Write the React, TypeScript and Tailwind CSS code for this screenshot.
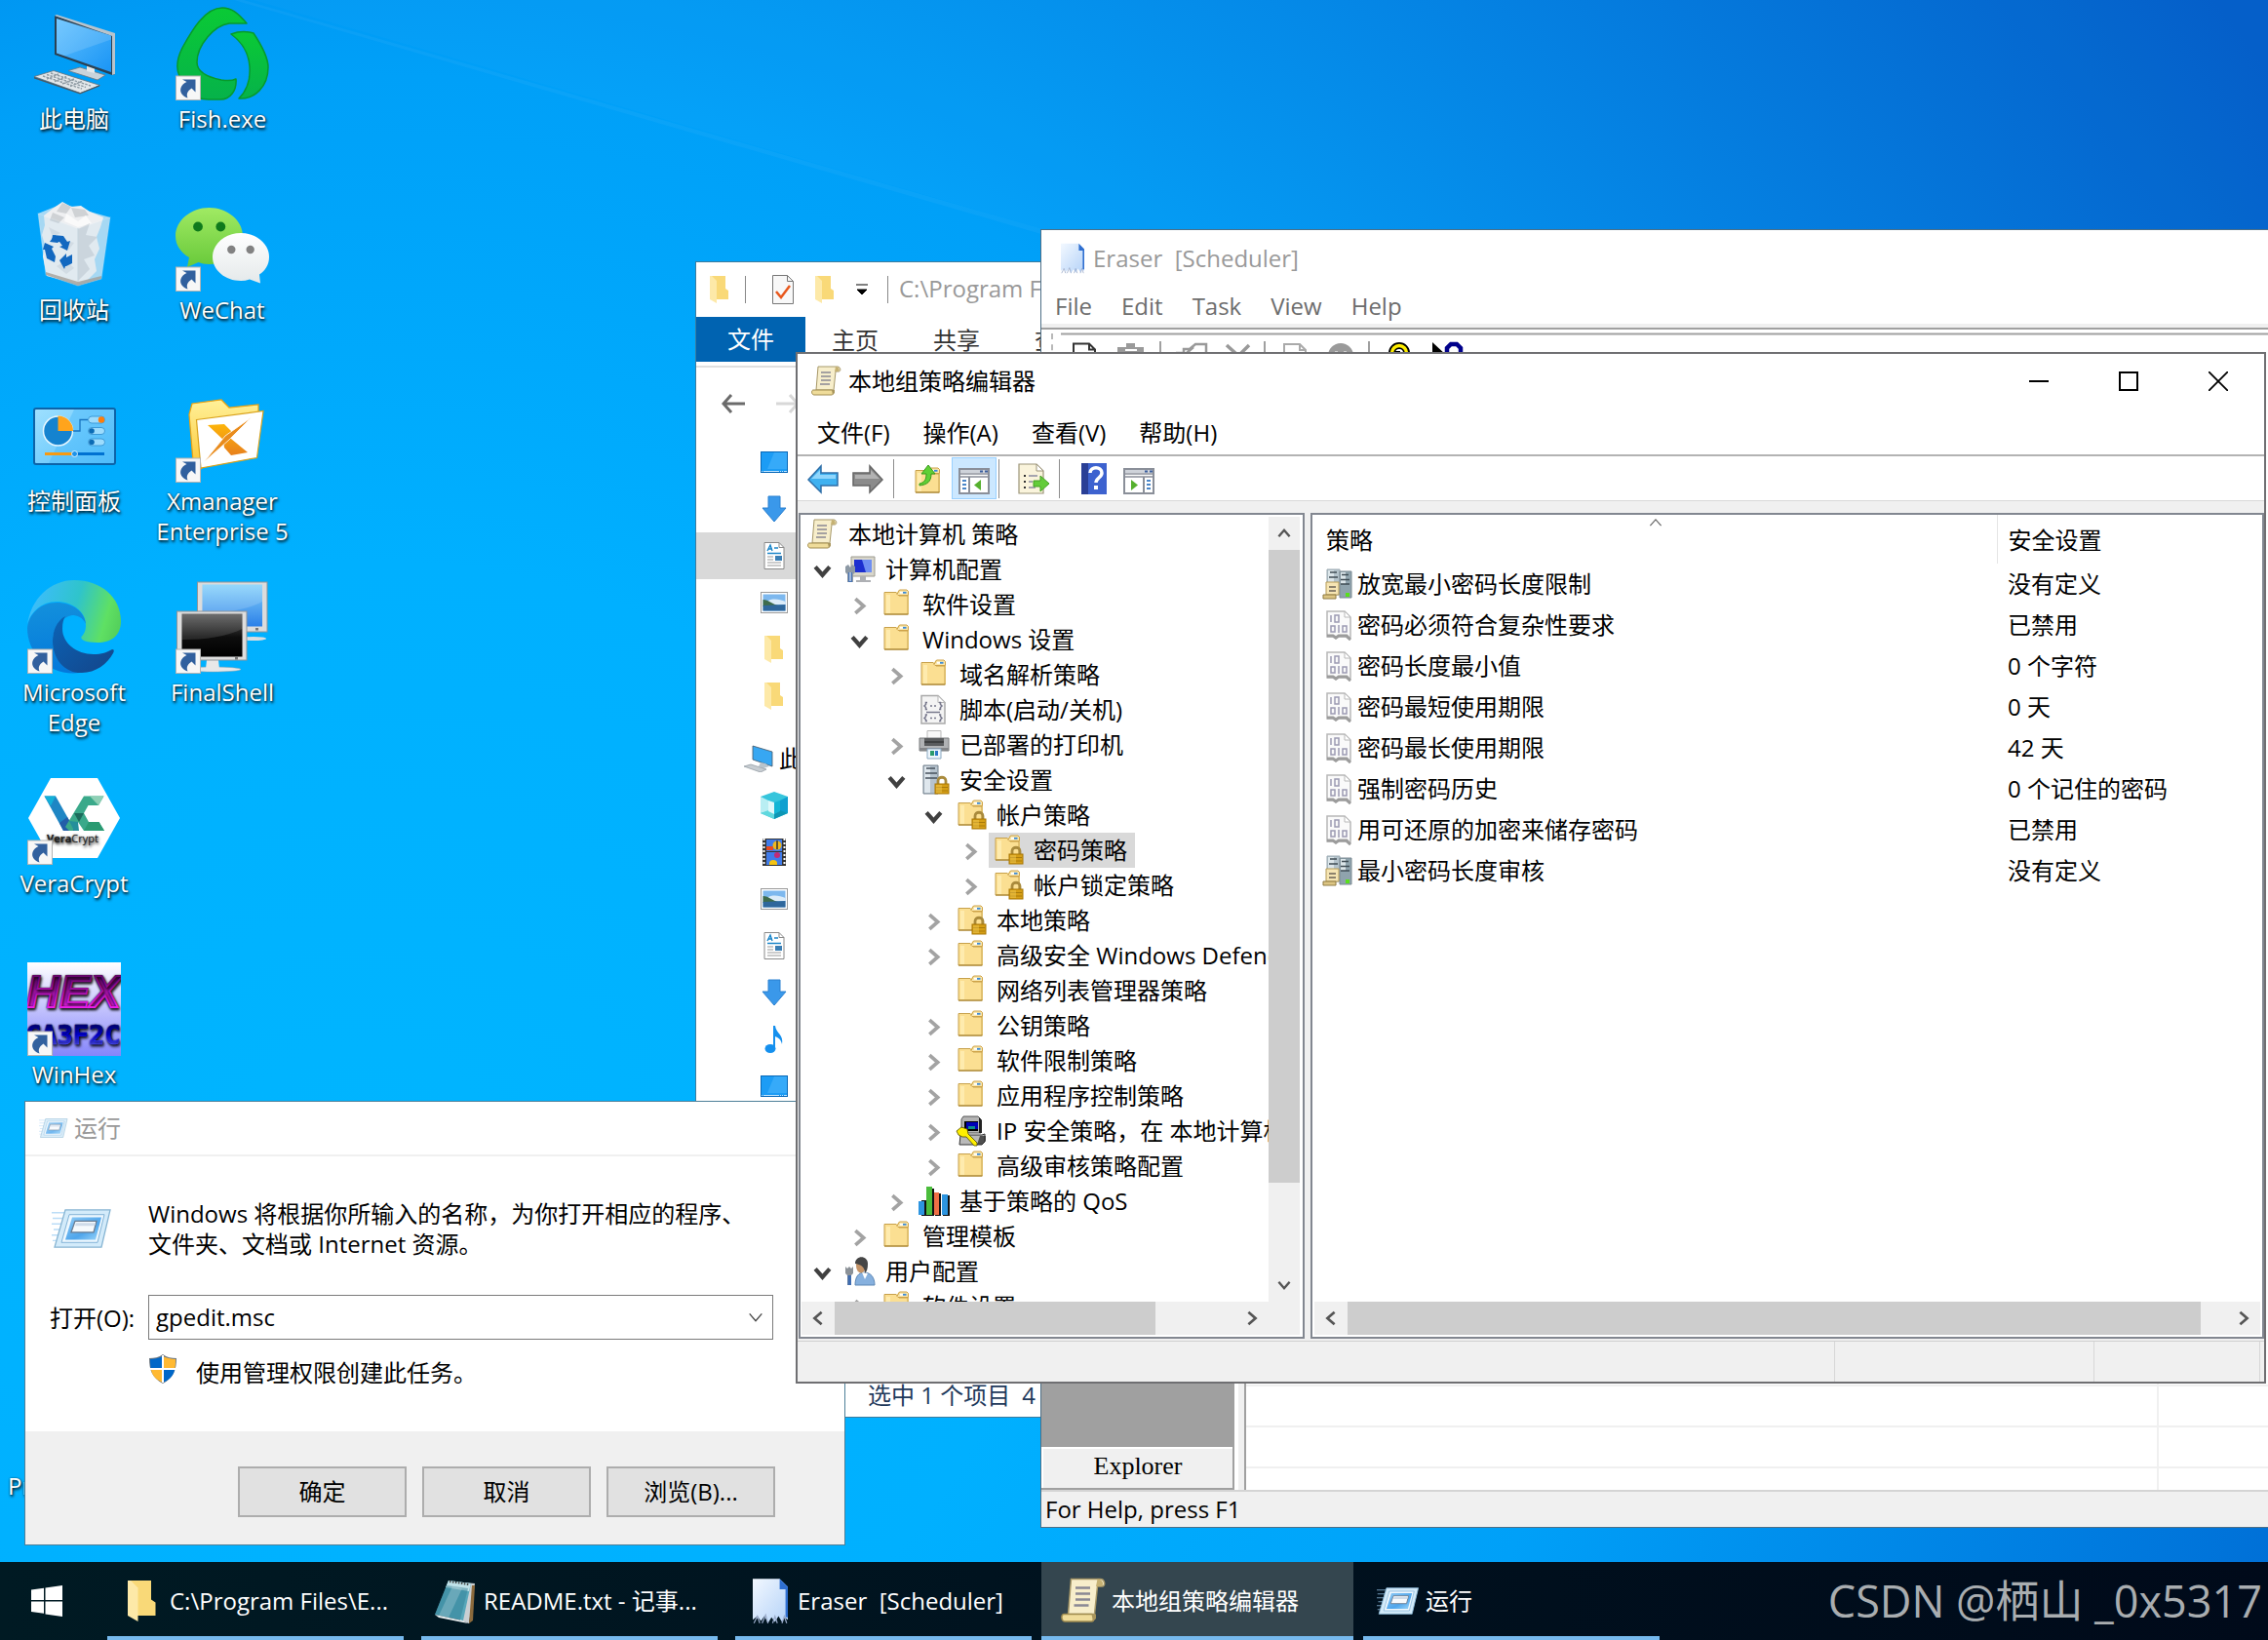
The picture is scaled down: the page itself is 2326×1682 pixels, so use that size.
import React from "react";

type P = { className?: string };

/* ------------------------------------------------------------------ */
/* Desktop icons                                                       */
/* ------------------------------------------------------------------ */

const ShortcutArrow = () => (
  <g>
    <rect x="0.5" y="71" width="25" height="24.5" fill="#f7f7f7" stroke="#b4b4b4" />
    <path d="M7 74.500h13.500v13l-4-4c-4.500 3-5.500 6-4 10-5.500-2-8.500-6-7-10.500 1-3 3.500-5 6-6z" fill="#31609e" />
  </g>
);

const ThisPcIcon = () => (
  <svg viewBox="0 0 96 96" className="size-24">
    <defs>
      <linearGradient id="pcScreen" x1="0" y1="0" x2="1" y2="1">
        <stop offset="0" stopColor="#5fc0ff" />
        <stop offset="1" stopColor="#1a95f5" />
      </linearGradient>
    </defs>
    <path d="M42 65.500l12-3.500 26 8-8 5z" fill="#c9d3da" stroke="#6b7780" strokeWidth=".8" />
    <path d="M61 56l8 2v10l-8-2z" fill="#e4e9ec" />
    <path d="M28 9l61.500 19v41.500L87 70 28 49z" fill="#2b4153" />
    <path d="M28 9l2-1 60 19v42l-3 1V30z" fill="#b9c4cc" />
    <path d="M30 12l56 17.500v37.500L30 47.500z" fill="url(#pcScreen)" />
    <path d="M30 12l56 17.500v4L38 50.300l-8-2.800z" fill="#fff" opacity=".14" />
    <path d="M7 71.500l20-6 47.500 15-20 8z" fill="#e2e7ea" stroke="#65717a" strokeWidth=".8" />
    <path d="M7 72v1.500l47 16 20-8v-1.300l-20 8z" fill="#4b5962" />
    <path d="M16 71l40 13M20 69.500l40 13M24 68l41 13M20 74l12-5M28 76.500l12-5M36 79l12-5M44 81.500l12-5" stroke="#8f9ba3" strokeWidth="1.400" strokeDasharray="2.500 1.200" />
  </svg>
);

const RecycleIcon = () => (
  <svg viewBox="0 0 96 96" className="size-24">
    <path d="M11 16l25-10 49 14-9 63-24 7-33-11z" fill="#cfe6f4" opacity=".8" />
    <path d="M17 18l9-7 10-7 9 5 10-1 9 6 14 6-3 10-4 10 3 12-5 11 2 12-9 9-12 4-30-8-4-20 2-12-3-10 3-10z" fill="#eeeff1" />
    <path d="M36 5l9 4-5 7-10-2zM45 10l14 2 4 6-14 2zM26 15l12 5-6 6-9-3z" fill="#cfd2d5" />
    <path d="M40 16l12 8 8-6 6 8-14 4-14-6z" fill="#fafafa" />
    <path d="M52 32l12-6-4 12 12 2-9 9 6 10-11 4 6 10-12 12z" fill="#d3d6da" />
    <path d="M22 30l12 6-8 4zM30 70l10-6 8 8-8 6zM36 42l12 4-6 8z" fill="#dcdfe2" />
    <path d="M11 16l41 15 33-11-9 63-24 7-33-11z" fill="#a9d4ee" opacity=".18" stroke="#e9f7ff" strokeWidth="1.200" />
    <path d="M52 31v59" stroke="#c5d5de" strokeWidth="1" />
    <path d="M19 76l33 10 24-6v3l-24 7-33-11z" fill="#a5a09a" opacity=".8" />
    <g fill="#1268c0">
      <path d="M26 38l11 1 4 6 3-1-3 10-8-4 3-1-3-4-8-1z" />
      <path d="M18 46l9 4-2 2 4 8-1 6-8-4-2-9-2 0z" />
      <path d="M33 64l7-7v4l6-3v9l-6 3-1 0-1 3z" />
      <path d="M23 45l5-7 7 5-4 3z" />
    </g>
  </svg>
);

const ControlPanelIcon = () => (
  <svg viewBox="0 0 96 96" className="size-24">
    <defs>
      <linearGradient id="cpBg" x1="0" y1="0" x2="1" y2="1">
        <stop offset="0" stopColor="#9fe0ff" />
        <stop offset="1" stopColor="#55c0fb" />
      </linearGradient>
    </defs>
    <rect x="7" y="20" width="83" height="57" rx="2" fill="url(#cpBg)" stroke="#0d63a8" strokeWidth="2" />
    <path d="M48 21h41v55H22z" fill="#48b8fa" opacity=".45" />
    <circle cx="31.500" cy="43" r="15" fill="#1583cf" stroke="#e6f7ff" strokeWidth="1.500" />
    <path d="M31.500 43V27.500A15.500 15.500 0 0 1 47 43z" fill="#ffa41c" />
    <path d="M47 43h7V31.500h8" fill="none" stroke="#1874c0" strokeWidth="1.300" />
    <g fill="#9ddcfd" stroke="#3d9bd8" strokeWidth="1">
      <rect x="62.500" y="28" width="17" height="7" rx="3.500" />
      <rect x="62.500" y="39.500" width="17" height="7" rx="3.500" />
      <rect x="62.500" y="51" width="17" height="7" rx="3.500" />
    </g>
    <circle cx="76" cy="31.500" r="3.200" fill="#ff7d0a" />
    <circle cx="66" cy="43" r="2.800" fill="#0b6bb5" />
    <circle cx="66" cy="54.500" r="2.800" fill="#0b6bb5" />
    <path d="M18 66.500h29" stroke="#f79a12" strokeWidth="3" />
    <path d="M49 66.500h30" stroke="#0072d2" strokeWidth="3" />
    <circle cx="48.500" cy="66.500" r="3" fill="#1c93ea" stroke="#fff" strokeWidth=".8" />
  </svg>
);

const EdgeIcon = () => (
  <svg viewBox="0 0 96 96" className="size-24">
    <defs>
      <linearGradient id="edTop" x1="0" y1=".4" x2="1" y2=".6">
        <stop offset="0" stopColor="#3dbcff" />
        <stop offset=".5" stopColor="#2fc4cb" />
        <stop offset=".85" stopColor="#5fe063" />
        <stop offset="1" stopColor="#55d15c" />
      </linearGradient>
      <linearGradient id="edLeft" x1=".3" y1="0" x2=".4" y2="1">
        <stop offset="0" stopColor="#1390dc" />
        <stop offset="1" stopColor="#0479db" />
      </linearGradient>
      <linearGradient id="edDark" x1="0" y1="0" x2="1" y2="1">
        <stop offset="0" stopColor="#0b63b6" />
        <stop offset="1" stopColor="#144589" />
      </linearGradient>
    </defs>
    <path d="M0 47C3 19 24 0 48 0c28 0 48 18 48 42 0 15-10 22-24 22-12 0-18-3-16.500-6 4-4 4.500-8 4.500-12C60 32 46 22 30 22 14 22 2 34 0 47z" fill="url(#edTop)" />
    <path d="M0 49C2 34 14 23 30 23c17 0 29 10 30 22-3-7-9-9-14-9-10 2-20 12-20 27 0 17 12 30 28 32C22 99 0 75 0 49z" fill="url(#edLeft)" />
    <path d="M39 37c-9 5-13 15-13 26 0 19 14 33 30 32 14 0 26-9 32-20q2-4-1-4c-5 3-11 5-19 5-18 0-32-12-32-26 0-6 1-10 3-13z" fill="url(#edDark)" />
    <ShortcutArrow />
  </svg>
);

const VeraCryptIcon = () => (
  <svg viewBox="0 0 96 96" className="size-24">
    <path d="M24 7h48l23 41-23 41H24L1 48z" fill="#fff" />
    <path d="M17.500 25.500H29L49 61H37z" fill="#1e86c4" />
    <path d="M17.500 25.500H29l-5 10z" fill="#12b0d8" />
    <path d="M33 53l8-6 8 14H37z" fill="#235ea8" />
    <path d="M58 25.500h20.500L73 35H62.500L58 43l5 9h10.500L79 61H58l-6-9-5 9h-4l-4-4z" fill="#3aa98a" />
    <path d="M64 25.500h14.500L73 35z" fill="#8fd0b5" />
    <path d="M48 43h10l-5 9z" fill="#1c6b5b" />
    <path d="M43 51l5 10h5l-1-9z" fill="#258f9b" />
    <path d="M63 52h10.500L79 61H58z" fill="#2a9a72" />
    <text x="20" y="73" fontFamily="Open Sans, sans-serif" fontSize="11" fill="#222">
      <tspan fontWeight="700">Vera</tspan>Crypt
    </text>
    <ShortcutArrow />
  </svg>
);

const WinHexIcon = () => (
  <svg viewBox="0 0 96 96" className="size-24">
    <defs>
      <linearGradient id="whBg" x1="0" y1="0" x2="0" y2="1">
        <stop offset="0" stopColor="#ffffff" />
        <stop offset="1" stopColor="#8585fb" />
      </linearGradient>
      <linearGradient id="whA" gradientUnits="userSpaceOnUse" x1="0" y1="9" x2="0" y2="48">
        <stop offset="0" stopColor="#4d0055" />
        <stop offset="1" stopColor="#f020f0" />
      </linearGradient>
      <linearGradient id="whB" gradientUnits="userSpaceOnUse" x1="0" y1="60" x2="0" y2="84">
        <stop offset="0" stopColor="#000050" />
        <stop offset=".6" stopColor="#0000f0" />
        <stop offset="1" stopColor="#4a4aff" />
      </linearGradient>
    </defs>
    <rect width="96" height="96" fill="url(#whBg)" />
    <text x="-1" y="46" fontFamily="Liberation Sans, sans-serif" fontWeight="700" fontStyle="italic" fontSize="47" fill="url(#whA)" stroke="url(#whA)" strokeWidth="2">
      HEX
    </text>
    <text x="-2" y="84" fontFamily="DejaVu Sans Mono, monospace" fontWeight="700" fontSize="27" fill="url(#whB)" stroke="url(#whB)" strokeWidth=".6">
      CA3F2C
    </text>
    <ShortcutArrow />
  </svg>
);

const FishIcon = () => (
  <svg viewBox="0 0 96 96" className="size-24">
    <defs>
      <linearGradient id="fishG" x1="0" y1="0" x2="0" y2="1">
        <stop offset="0" stopColor="#0aca35" />
        <stop offset="1" stopColor="#06b24a" />
      </linearGradient>
    </defs>
    <g fill="url(#fishG)" stroke="#079a2b" strokeWidth="1.500" strokeLinejoin="round">
      <path d="M73 17C64 6 57 1 48 1 30 1 17 24 7 42c-5 10-7 20-3 29 3 12 12 24 30 24h12c10 0 17-9 16-21-4 2-9 2-15 1-15-3-25-8-25-18 0-18 18-38 33-40z" />
      <path d="M57 28c8-3 16-3 23-1 8 12 15 24 15 35 0 20-14 33-30 32 9-9 12-20 11-33-1-14-8-25-19-33z" />
    </g>
    <ShortcutArrow />
  </svg>
);

const WeChatIcon = () => (
  <svg viewBox="0 0 96 96" className="size-24">
    <defs>
      <linearGradient id="wcG" x1="0" y1="0" x2="0" y2="1">
        <stop offset="0" stopColor="#a0ea63" />
        <stop offset="1" stopColor="#68c93a" />
      </linearGradient>
      <linearGradient id="wcW" x1="0" y1="0" x2="0" y2="1">
        <stop offset="0" stopColor="#ffffff" />
        <stop offset="1" stopColor="#e4e9ea" />
      </linearGradient>
    </defs>
    <path d="M34.500 10C53 10 69 23 69 39S53 68 34.500 68c-5 0-8-1-11-2L12 71l2-10C5 56 0 48 0 39c0-16 16-29 34.500-29z" fill="url(#wcG)" />
    <circle cx="23" cy="29.500" r="4.900" fill="#0f7a1c" />
    <circle cx="46.300" cy="29.500" r="4.900" fill="#0f7a1c" />
    <path d="M67 36c16 0 29 11 29 24.500 0 8-4 14-10 18l1 9-11-4c-3 1-6 1.500-9 1.500-16 0-29-11-29-24.500S51 36 67 36z" fill="url(#wcW)" />
    <circle cx="57.300" cy="53" r="4.200" fill="#828282" />
    <circle cx="76.700" cy="53" r="4.200" fill="#828282" />
    <ShortcutArrow />
  </svg>
);

const XmanagerIcon = () => (
  <svg viewBox="0 0 96 96" className="size-24">
    <defs>
      <linearGradient id="xmF" x1="0" y1="0" x2="0" y2="1">
        <stop offset="0" stopColor="#fff19a" />
        <stop offset="1" stopColor="#fcc733" />
      </linearGradient>
      <linearGradient id="xmX" x1="0" y1="0" x2="0" y2="1">
        <stop offset="0" stopColor="#fdb50a" />
        <stop offset="1" stopColor="#e8801c" />
      </linearGradient>
    </defs>
    <path d="M14 26l3-11 30-4 8 8 30-3v10L26 82l-8-8z" fill="url(#xmF)" stroke="#eea20f" strokeWidth="1.200" />
    <path d="M21.500 31.500L90 22.500l-6.500 48L26 81z" fill="#fff" stroke="#d9a21b" strokeWidth="1.200" />
    <path d="M33 37l17-1 7 7v8l17 14-17 3-7-8-1-8z" fill="url(#xmX)" />
    <path d="M78 29L55 52 29 75l22-27z" fill="#e98c1d" stroke="#fff" strokeWidth=".8" />
    <ShortcutArrow />
  </svg>
);

const FinalShellIcon = () => (
  <svg viewBox="0 0 96 96" className="size-24">
    <defs>
      <linearGradient id="fsB" x1="0" y1="0" x2="0" y2="1">
        <stop offset="0" stopColor="#86d2fb" />
        <stop offset="1" stopColor="#2b80e8" />
      </linearGradient>
      <linearGradient id="fsK" x1="0" y1="0" x2="0" y2="1">
        <stop offset="0" stopColor="#5a5a5a" />
        <stop offset=".55" stopColor="#0d0d0d" />
        <stop offset="1" stopColor="#000" />
      </linearGradient>
    </defs>
    <ellipse cx="80" cy="60" rx="13" ry="2" fill="#d9dde0" />
    <rect x="22.500" y="2" width="71.500" height="51" fill="#dcdcdc" stroke="#8e9499" />
    <rect x="27.500" y="4.500" width="61.500" height="43" fill="url(#fsB)" />
    <path d="M27.500 34C50 34 75 30 89 22V4.500H27.500z" fill="#fff" opacity=".15" />
    <rect x="82" y="49" width="3" height="2.500" fill="#777" />
    <ellipse cx="38" cy="91.500" rx="29" ry="2.500" fill="#e6e8ea" stroke="#9aa0a5" strokeWidth=".5" />
    <path d="M32 82h12l1 9H31z" fill="#e8e8e8" />
    <rect x="1.500" y="32" width="71.500" height="50" fill="#dedede" stroke="#8e9499" />
    <rect x="6.500" y="34.500" width="62" height="44" fill="url(#fsK)" />
    <path d="M6.500 61c24 0 46-3 62-11V34.500h-62z" fill="#fff" opacity=".12" />
    <rect x="61" y="79" width="3" height="2.500" fill="#777" />
    <ShortcutArrow />
  </svg>
);

const desktopColumns: { name: string; icon: React.ReactNode }[][] = [
  [
    { name: "此电脑", icon: <ThisPcIcon /> },
    { name: "回收站", icon: <RecycleIcon /> },
    { name: "控制面板", icon: <ControlPanelIcon /> },
    { name: "Microsoft Edge", icon: <EdgeIcon /> },
    { name: "VeraCrypt", icon: <VeraCryptIcon /> },
    { name: "WinHex", icon: <WinHexIcon /> },
  ],
  [
    { name: "Fish.exe", icon: <FishIcon /> },
    { name: "WeChat", icon: <WeChatIcon /> },
    { name: "Xmanager Enterprise 5", icon: <XmanagerIcon /> },
    { name: "FinalShell", icon: <FinalShellIcon /> },
  ],
];

/* ------------------------------------------------------------------ */
/* Small icons                                                         */
/* ------------------------------------------------------------------ */

const ScrollIcon = ({ className = "size-8" }: P) => (
  <svg viewBox="0 0 32 32" className={className}>
    <path d="M7 1h20c3 0 4 5 1 5h-3L23 25H5z" fill="#f7eecb" stroke="#a79868" strokeWidth="1" />
    <path d="M25 1c4 0 5 5 2 5h-3z" fill="#c5b173" />
    <path d="M2 25h19c2 0 2 5 0 5H3c-3 0-3-5-1-5z" fill="#efdc9a" stroke="#a08c50" strokeWidth="1" />
    <path d="M21 25h3v3l-2 2z" fill="#a9965d" />
    <path d="M10 7h10M10 11h10M10 15h10M9 19h10" stroke="#8a8894" strokeWidth="1.700" />
  </svg>
);

const Folder = () => (
  <g>
    <path d="M3 3.500h13l2-2.500h8l2 2v23H3z" fill="#f6dc8c" />
    <path d="M3 3.500h12l3 3.500h9v19H3z" fill="#fbdf92" stroke="#c7a14c" strokeWidth="1" />
    <path d="M5 6h4v19H5z" fill="#fff0bb" opacity=".7" />
    <path d="M16 5.500L18.500 1H26l1.500 1.500v4H17z" fill="#f9e6ac" stroke="#cfa348" strokeWidth="1" />
    <path d="M19 3.800h3.500" stroke="#fff" strokeWidth="1.800" />
    <path d="M22 3.800h3.500" stroke="#3a8ad8" strokeWidth="1.800" />
    <path d="M3 26h24.500" stroke="#a88636" strokeWidth="1.200" />
  </g>
);

const Lock = () => (
  <g>
    <path d="M20 21v-4c0-5 8-5 8 0v4" fill="none" stroke="#a98a3c" strokeWidth="2.800" />
    <rect x="17" y="20" width="14" height="10" fill="#d69f16" stroke="#a87705" strokeWidth="1" />
    <path d="M18 23.500h12M18 27h12" stroke="#a97b0b" strokeWidth="1" />
    <path d="M18 21h6v8h-6z" fill="#f3cf59" opacity=".45" />
  </g>
);

const FolderIcon = () => (
  <svg viewBox="0 0 32 32" className="size-8"><Folder /></svg>
);
const FolderLockIcon = () => (
  <svg viewBox="0 0 32 32" className="size-8"><Folder /><Lock /></svg>
);

const ComputerCfgIcon = () => (
  <svg viewBox="0 0 32 32" className="size-8">
    <path d="M7 3h24v20H7z" fill="#d8d6cb" stroke="#9c9a90" />
    <path d="M10 6h18v13H10z" fill="#1c2fd0" />
    <path d="M18 6h10v13h-6z" fill="#6f8ff2" />
    <path d="M16 23h6v4h5v2H12v-2h4z" fill="#aeb0b4" />
    <path d="M1 13l3-2 2 3 2-3 3 2v6l-2 2v8H3v-8l-2-2z" fill="#8d99a5" />
    <path d="M4 19h4v10H4z" fill="#4a74b4" />
    <path d="M6 19v9" stroke="#dfe9f6" strokeWidth="1.200" />
  </svg>
);

const ScriptIcon = () => (
  <svg viewBox="0 0 32 32" className="size-8">
    <path d="M3 1.500h17l7 7V30H3z" fill="#f4f4f4" stroke="#a9a9a9" strokeWidth="1.500" />
    <path d="M20 1.500v7h7z" fill="#fff" stroke="#b5b5b5" strokeWidth="1" />
    <g fill="none" stroke="#77788c" strokeWidth="1.500">
      <path d="M9 8.500H7.500v2L6 12l1.500 1.500v2H9M21 8.500h1.500v2L24 12l-1.500 1.500v2H21M12 12h2M16 12h2M8 18.500h14" />
      <path d="M9 21H7.500v2L6 24.500 7.500 26v1.500H9M21 21h1.500v2l1.500 1.500-1.500 1.500v1.500H21M12 24.500h2M16 24.500h2" />
    </g>
  </svg>
);

const PrinterIcon = () => (
  <svg viewBox="0 0 32 32" className="size-8">
    <path d="M9 1.500h14V11H9z" fill="#f8f8f8" stroke="#b9b9b9" />
    <path d="M1 9h30v13H1z" fill="#b1b3b5" stroke="#7a7c7e" />
    <path d="M6 9h20v8H6z" fill="#5a5c5e" />
    <path d="M6 12h20v2H6z" fill="#3f4142" />
    <path d="M1 19h30v3H1z" fill="#85878a" />
    <path d="M9 20h14v10H9z" fill="#eef6fc" stroke="#8aa9c2" />
    <path d="M12 22h4v5h-4z" fill="#2a9a6c" />
    <path d="M17 22h3v5h-3z" fill="#2a77c8" />
  </svg>
);

const ServerLockIcon = () => (
  <svg viewBox="0 0 32 32" className="size-8">
    <path d="M5 1h15v29H5z" fill="#b6c3ce" stroke="#72808c" />
    <path d="M6 2h6v27H6z" fill="#dfe7ed" />
    <path d="M8 4h9M7 9h12M7 14h12" stroke="#47525c" strokeWidth="1.700" />
    <Lock />
  </svg>
);

const IpSecIcon = () => (
  <svg viewBox="0 0 32 32" className="size-8">
    <path d="M8 1h15l3 3v14H6V4z" fill="#b5b5b5" stroke="#555" />
    <path d="M24 2l3 3v13h-3z" fill="#222" />
    <path d="M9 6h14v10H9z" fill="#000" />
    <path d="M11 7h12v7H11z" fill="#0000b8" />
    <path d="M13 11h7v3h-7z" fill="#0a8c8c" />
    <path d="M5 20h22l3-1v8l-3 3H4z" fill="#b9b9b9" stroke="#333" />
    <path d="M25 21h6v5l-4 4h-5z" fill="#222" opacity=".7" />
    <path d="M1 16l5-4 6 2 1 5 9 9v3h-3l-8-9H7l-4-2z" fill="#ffef00" stroke="#4b4600" strokeWidth=".8" />
  </svg>
);

const QosIcon = () => (
  <svg viewBox="0 0 32 32" className="size-8">
    <path d="M3 15h6v16H3zM9 3h7v28H9zM17 8h6v23h-6zM25 10h7v21h-7z" fill="#111" />
    <path d="M0 16h6v14H0z" fill="#2d95e0" />
    <path d="M8 1h6v29H8z" fill="#4bbd3c" />
    <path d="M16 7h5v23h-5z" fill="#ef7045" />
    <path d="M24 9h6v21h-6z" fill="#2d95e0" />
  </svg>
);

const UserCfgIcon = () => (
  <svg viewBox="0 0 32 32" className="size-8">
    <path d="M11 30c0-9 4-13 9-13 7 0 11 5 11 13z" fill="#86b0de" stroke="#5d87b5" />
    <path d="M18 17l3 7 3-6z" fill="#fff" />
    <ellipse cx="17" cy="10" rx="5" ry="7.500" fill="#c59468" />
    <path d="M11 8c0-9 13-9 13 0 0 5-1 8-3 10 0-6-3-9-10-10z" fill="#454545" />
    <path d="M1 11l2 2 2-2 2 2 2-2v7l-2 2v10H3V20l-2-2z" fill="#8b9197" />
    <path d="M3.500 20h3.500v10H3.500z" fill="#3f6cb0" />
  </svg>
);

const PolicyServerIcon = () => (
  <svg viewBox="0 0 32 32" className="size-8">
    <path d="M5 1h13v26H5z" fill="#b4c3cb" stroke="#9aa9b1" />
    <path d="M18 3h12v27H18z" fill="#8fa3ad" stroke="#7a8992" />
    <path d="M6 2h6v12H6zM19 4h5v12h-5z" fill="#dce6ea" />
    <path d="M8 4h7M20 6.500h7M7 9h9M19 11.500h9M19 16h9" stroke="#3f4c54" strokeWidth="1.600" />
    <path d="M4 14h13v13H4z" fill="#f6e5b3" stroke="#b59c5a" />
    <path d="M1 27h13v4H1z" fill="#dcc583" stroke="#8f7a42" />
    <path d="M7 19h7M7 23h7" stroke="#6b6255" strokeWidth="1.500" />
    <path d="M24 25h4v4h-4z" fill="#59e01c" />
  </svg>
);

const PolicyBitsIcon = () => (
  <svg viewBox="0 0 32 32" className="size-8">
    <path d="M5 2h18l6 6v20l-1 3-4-3H17l-3 2-3-2H5z" fill="#fafafa" stroke="#b8b8b8" strokeWidth="1.500" />
    <path d="M23 2v6h6z" fill="#fff" stroke="#b8b8b8" />
    <path d="M5 27h6l3 2 3-2h8l4 4" fill="none" stroke="#9c9c9c" strokeWidth="3" />
    <g fill="none" stroke="#9c9ab2" strokeWidth="1.500">
      <path d="M9 6v7M13 6h4v7h-4zM9 17h4v6H9zM17 16v8M21 17h4v6h-4z" />
    </g>
  </svg>
);

const NotchFolder = ({ className = "h-7 w-5" }: P) => (
  <svg viewBox="0 0 20 28" className={className}>
    <path d="M1 0h15v13l3 2v9H6z" fill="#f9d978" />
    <path d="M0 0h2l5 5v23l-7-4z" fill="#fde9a8" />
  </svg>
);

const DesktopIcon = () => (
  <svg viewBox="0 0 28 22" className="h-[22px] w-7">
    <rect x=".5" y=".5" width="27" height="21" fill="#1c9cf5" stroke="#0868b8" />
    <path d="M14 1h13v17H7z" fill="#48b4fb" opacity=".6" />
    <path d="M1 20.500h26" stroke="#bfe4ff" strokeDasharray="1 1 16 1 1 1" />
  </svg>
);
const DownloadIcon = () => (
  <svg viewBox="0 0 28 28" className="size-7">
    <path d="M8 1h12v12h6L14 27 2 13h6z" fill="#3a98ea" stroke="#2a80d0" />
  </svg>
);
const DocIcon = () => (
  <svg viewBox="0 0 28 28" className="size-7">
    <path d="M4 .5h15l5 5v22H4z" fill="#fff" stroke="#8a8a8a" />
    <path d="M19 .5v5h5" fill="none" stroke="#8a8a8a" />
    <path d="M7 9l3-6 2 6M8 7h4M14 6h4M7 11.500h14" stroke="#1c86c9" strokeWidth="1.400" fill="none" />
    <path d="M15 14h7v5h-7z" fill="#3b7fb5" />
    <path d="M7 15h6M7 18h6M7 21h14M7 24h14" stroke="#9a9a9a" strokeWidth="1.200" />
  </svg>
);
const PictureIcon = () => (
  <svg viewBox="0 0 28 22" className="h-[22px] w-7">
    <rect x=".5" y=".5" width="27" height="21" fill="#fff" stroke="#9a9a9a" />
    <path d="M2.500 2.500h23v17h-23z" fill="#7db8ee" />
    <path d="M8 9c6-3 12-1 17.500 1v3h-17z" fill="#dcecf9" />
    <path d="M2.500 8c6 0 10 5 16 6l-16 1z" fill="#3e6b4c" />
    <path d="M2.500 14l23-1v6.500h-23z" fill="#2f679c" />
  </svg>
);
const SmallPcIcon = () => (
  <svg viewBox="0 0 30 28" className="h-7 w-[30px]">
    <path d="M9 1l20 6v15L9 15z" fill="#37a7f2" stroke="#456" strokeWidth=".8" />
    <path d="M17 18l5 1 4 3-6 2-5-2z" fill="#b9c4cc" />
    <path d="M0 22l7-2 16 5-6 3z" fill="#c7cdd2" stroke="#8a949b" strokeWidth=".7" />
  </svg>
);
const CubeIcon = () => (
  <svg viewBox="0 0 28 28" className="size-7">
    <path d="M0 5l14-5 14 5v17l-14 6-14-6z" fill="#36c5dc" />
    <path d="M0 5l8 4v11l-8 2z" fill="#b9eef3" />
    <path d="M0 22l8-3 6 4v5z" fill="#5fd8de" />
    <path d="M28 5l-8 4v11l8 2z" fill="#0fa0d0" />
    <path d="M28 22l-8-3-6 4v5z" fill="#0d96b4" />
    <path d="M8 9l6 2v12l-6-3z" fill="#e0f8fa" />
    <path d="M20 9l-6 2v12l6-3z" fill="#12b5d5" />
  </svg>
);
const VideoIcon = () => (
  <svg viewBox="0 0 28 28" className="size-7">
    <rect x="2" y="0" width="24" height="28" fill="#333" />
    <path d="M3.500 0v28M24.500 0v28" stroke="#fff" strokeWidth="2" strokeDasharray="2 2" />
    <path d="M6 1h16v12H6zM6 14h16v13H6z" fill="#3f7bea" />
    <path d="M6 8h7v4H6z" fill="#e8491f" />
    <circle cx="17" cy="7" r="4.500" fill="#f0b81c" />
    <path d="M17 2v9" stroke="#333" strokeWidth="1.500" />
    <circle cx="17" cy="17" r="3" fill="#c22a76" />
    <path d="M9 25c0-4 8-4 8 0v2H9z" fill="#f5c414" />
  </svg>
);
const MusicIcon = () => (
  <svg viewBox="0 0 28 28" className="size-7">
    <ellipse cx="10" cy="23.500" rx="5.500" ry="4.500" fill="#1590ee" />
    <path d="M13 0h2c1 8 9 9 7 19-1-5-4-7-7-8v13h-2z" fill="#1590ee" />
  </svg>
);

const RunGlyph = ({ className = "" }: P) => (
  <svg viewBox="0 0 62 42" className={className} preserveAspectRatio="none">
    <defs>
      <linearGradient id="runIn" x1="0" y1="0" x2="1" y2="1">
        <stop offset="0" stopColor="#8fcbf6" />
        <stop offset=".6" stopColor="#4fa6ec" />
        <stop offset="1" stopColor="#9fd8fb" />
      </linearGradient>
    </defs>
    <path d="M0 4h16M1 10h14M0 16h12M2 22h10M0 28h10M1 34h8" stroke="#9fd0f5" strokeWidth="1.500" opacity=".7" />
    <path d="M14 1h46l-9 40H3z" fill="#d3ebfa" stroke="#86b4d2" strokeWidth="1.300" />
    <path d="M18 6h36l-7 30H10z" fill="#eef8fe" stroke="#7fb1d6" strokeWidth="1" />
    <path d="M21 9h30l-6 24H14z" fill="url(#runIn)" />
    <path d="M24 13h22l-3 12H20z" fill="#f6fafd" stroke="#6a7d92" strokeWidth="1.300" />
    <path d="M25 15h20l-1 3H24z" fill="#cfdcea" />
  </svg>
);

const EraserDoc = ({ className = "" }: P) => (
  <svg viewBox="0 0 32 40" className={className}>
    <defs>
      <linearGradient id="erG" x1="0" y1="0" x2="1" y2="1">
        <stop offset="0" stopColor="#f2f8ff" />
        <stop offset="1" stopColor="#b4d2f8" />
      </linearGradient>
    </defs>
    <path d="M1 1h23l7 7v28l-3-2-2 4-3-5-3 5-3-4-3 5-3-6-3 4-3-4-4 3z" fill="url(#erG)" />
    <path d="M24 1l7 7v26h-2V10h-5z" fill="#2f6fd0" />
    <path d="M2 39l3-6 2 6M9 39l3-7 2 7M18 39l2-6 2 6M26 39l2-6 2 6" stroke="#9aabca" fill="none" />
  </svg>
);

const NotepadIcon = () => (
  <svg viewBox="0 0 48 48" className="size-12">
    <path d="M19 4l24 2-6 41-9-3z" fill="#c9cfd3" />
    <path d="M40 8l3 0-2 36-4 3z" fill="#8b6a3c" />
    <path d="M16 3l23 3-8 38L2 38z" fill="#58a7ba" />
    <path d="M16 3l23 3-2 8L13 10z" fill="#bfe1e8" />
    <path d="M14 8l22 3-8 32L2 38z" fill="#2d7d92" opacity=".45" />
    <path d="M20 9l10 2-14 30-10-2z" fill="#fff" opacity=".2" />
    <path d="M2 38l28 6 6 3L6 41z" fill="#e8eef0" />
    <path d="M17 4l20 3" stroke="#444" strokeWidth="2" strokeDasharray="1.500 1.500" />
  </svg>
);

const Chevron = ({ dir, className }: { dir: "up" | "down" | "left" | "right"; className?: string }) => {
  const d = {
    up: "M3 14l7-8 7 8",
    down: "M3 6l7 8 7-8",
    left: "M14 3l-8 7 8 7",
    right: "M6 3l8 7-8 7",
  }[dir];
  return (
    <svg viewBox="0 0 20 20" className={className} fill="none" stroke="currentColor">
      <path d={d} />
    </svg>
  );
};

/* ------------------------------------------------------------------ */
/* File Explorer                                                       */
/* ------------------------------------------------------------------ */

const quickIcons = [DesktopIcon, DownloadIcon, DocIcon, PictureIcon, NotchFolder, NotchFolder];
const pcIcons = [CubeIcon, VideoIcon, PictureIcon, DocIcon, DownloadIcon, MusicIcon, DesktopIcon];

const ExplorerWindow = () => (
  <section aria-label="文件资源管理器" className="absolute left-[713px] top-[268px] flex h-[1186px] w-[900px] flex-col border border-[#3c7c9e] bg-white">
    <header className="flex h-14 shrink-0 items-center pl-3.5 text-[#999]">
      <NotchFolder />
      <span className="ml-4 h-7 w-px bg-[#888]" />
      <svg viewBox="0 0 22 30" className="ml-[27px] h-[30px] w-[22px]">
        <path d="M.5 .5h15l6 6v23H.5z" fill="#f8f8f8" stroke="#777" />
        <path d="M15.500 .5v6h6" fill="none" stroke="#777" />
        <path d="M4 17l5 6 9-12" fill="none" stroke="#e8571c" strokeWidth="2.500" />
      </svg>
      <NotchFolder className="ml-[22px] h-7 w-5" />
      <svg viewBox="0 0 12 12" className="ml-[22px] size-3">
        <path d="M0 1h12M1 6h10l-5 5z" fill="#000" stroke="#000" />
      </svg>
      <span className="ml-5 h-7 w-px bg-[#888]" />
      <span className="ml-[11px] whitespace-pre pb-0.5">C:\Program Files</span>
    </header>
    <nav className="flex h-[46px] shrink-0 items-center text-[#333]">
      <button className="h-full w-28 bg-[#0063b1] text-white">文件</button>
      <button className="ml-[27px] pt-0.5">主页</button>
      <button className="ml-14 pt-0.5">共享</button>
      <button className="ml-14 pt-0.5">查看</button>
    </nav>
    <div className="mt-1 flex h-[75px] shrink-0 items-center gap-8 border-t-2 border-[#e0e0e0] pl-[26px]">
      <svg viewBox="0 0 24 20" className="h-5 w-6" fill="none" stroke="#6b6b6b" strokeWidth="3">
        <path d="M10 1L2 10l8 9M2 10h22" />
      </svg>
      <svg viewBox="0 0 24 20" className="h-5 w-6" fill="none" stroke="#d8d8d8" strokeWidth="3">
        <path d="M14 1l8 9-8 9M22 10H0" />
      </svg>
    </div>
    <div className="min-h-0 flex-1 overflow-hidden">
      {quickIcons.map((Icon, i) => (
        <div key={i} className={i === 2 ? "flex h-12 w-40 items-center justify-center bg-[#d9d9d9]" : "flex h-12 w-40 items-center justify-center"}>
          <Icon />
        </div>
      ))}
      <div className="mt-4 flex h-12 w-40 items-center gap-[6px] pl-[49px]">
        <SmallPcIcon />
        <span>此</span>
      </div>
      {pcIcons.map((Icon, i) => (
        <div key={i} className="flex h-12 w-40 items-center justify-center">
          <Icon />
        </div>
      ))}
    </div>
    <footer className="flex h-10 shrink-0 items-center pb-1 pl-[176px] text-[#1e395b]">
      <span className="mr-3">选中 1 个项目</span>
      <span>4</span>
    </footer>
  </section>
);

/* ------------------------------------------------------------------ */
/* Eraser                                                              */
/* ------------------------------------------------------------------ */

const EraserWindow = () => (
  <section aria-label="Eraser" className="absolute -right-10 left-[1067px] top-[235px] flex h-[1332px] flex-col border border-[#4d6f86] bg-white">
    <header className="flex h-[58px] shrink-0 items-center pl-[18px] text-[#999]">
      <EraserDoc className="h-8 w-7" />
      <h2 className="ml-[7px] whitespace-pre">Eraser  [Scheduler]</h2>
    </header>
    <nav className="flex h-[38px] shrink-0 items-center gap-[30px] pl-3.5 pt-0.5 text-[#6d6d6d]">
      {["File", "Edit", "Task", "View", "Help"].map((m) => (
        <button key={m}>{m}</button>
      ))}
    </nav>
    <div className="h-1.5 shrink-0 border-b-2 border-[#a0a0a0] bg-[#f0f0f0]" />
    <div className="flex h-11 shrink-0 gap-2 pl-2 pt-1">
      <div className="w-1 border-r-2 border-dashed border-[#b8b8b8]" />
      <svg viewBox="0 0 500 42" className="h-[42px] w-[500px] overflow-visible" fill="none">
        <path d="M0 .5h1300" stroke="#a0a0a0" strokeWidth="2" />
        <path d="M13 32V10.500h16l6 6V32M29 10.500v6h6" stroke="#333" strokeWidth="2" />
        <path d="M18 21h4" stroke="#c00" strokeWidth="2" />
        <path d="M58 32V14h9v-4h9v4h9v18z" fill="#9a9a9a" />
        <path d="M66 17h12" stroke="#fff" strokeWidth="2" />
        <path d="M102 8v30M209 8v30M316 8v30" stroke="#a0a0a0" strokeWidth="2" />
        <path d="M118 20h8v-4h6l6-5h11v20M122 26l14-12M118 20v10" stroke="#999" strokeWidth="2.500" />
        <path d="M170 12l22 20M193 12l-20 20" stroke="#999" strokeWidth="3.500" />
        <path d="M229 32V11h16l6 6v14M245 11v6h6" stroke="#aaa" strokeWidth="2" />
        <circle cx="287" cy="23" r="13" fill="#9a9a9a" />
        <path d="M281 20h3M290 20h3" stroke="#fff" strokeWidth="3" />
        <circle cx="347" cy="20" r="7.500" stroke="#000" strokeWidth="7" />
        <circle cx="347" cy="20" r="7.500" stroke="#ffee00" strokeWidth="3.500" />
        <path d="M343 19h4v3" stroke="#000" strokeWidth="2" />
        <path d="M381 9v24l14-11z" fill="#000" />
        <path d="M396 20v-5l4-4h6l4 4v7l-6 5v5" stroke="#00008b" strokeWidth="4.500" />
      </svg>
    </div>
    <div className="flex min-h-0 flex-1">
      <aside className="flex w-[198px] flex-col justify-end bg-[#a0a0a0]">
        <button className="mb-0.5 mr-0.5 h-[42px] border-l-2 border-t-2 border-white bg-[#f0f0f0] pb-1 font-['Liberation_Serif','Noto_Sans_CJK_SC',serif] text-[26px]">Explorer</button>
      </aside>
      <div className="w-3 border-l-4 border-r-2 border-l-white border-r-[#a0a0a0] bg-[#f0f0f0]" />
      <div className="flex flex-1 flex-col justify-end overflow-hidden">
        {[0, 1, 2, 3].map((r) => (
          <div key={r} className={r === 3 ? "flex h-[22px]" : "flex h-[42px] border-b-2 border-[#f0f0f0]"}>
            <div className="flex-1 border-r-2 border-[#f0f0f0]" />
            <div className="w-[151px]" />
          </div>
        ))}
      </div>
    </div>
    <footer className="flex h-[38px] shrink-0 items-center border-t-2 border-[#d4d4d4] bg-[#f0f0f0] pl-1">For Help, press F1</footer>
  </section>
);

/* ------------------------------------------------------------------ */
/* Run dialog                                                          */
/* ------------------------------------------------------------------ */

const RunDialog = () => (
  <section aria-label="运行" className="absolute left-[25px] top-[1129px] flex w-[842px] flex-col border border-[#4e7f99] bg-white">
    <header className="flex h-14 items-center gap-1.5 border-b-2 border-[#f0f0f0] pl-3.5 text-[#999]">
      <RunGlyph className="h-5 w-[30px] opacity-80" />
      <h2>运行</h2>
    </header>
    <div className="flex h-[282px] flex-col px-[25px] pt-[43px]">
      <div className="flex items-center leading-[31px]">
        <RunGlyph className="ml-0.5 h-10 w-[62px]" />
        <p className="ml-[37px]">
          Windows 将根据你所输入的名称，为你打开相应的程序、
          <br />
          文件夹、文档或 Internet 资源。
        </p>
      </div>
      <div className="mt-[37px] flex items-center">
        <label htmlFor="run-open" className="w-[101px] whitespace-nowrap pt-0.5">
          打开(O):
        </label>
        <div className="flex h-[46px] w-[641px] items-center border border-[#7a7a7a]">
          <input id="run-open" defaultValue="gpedit.msc" className="h-full min-w-0 flex-1 pb-0.5 pl-[7px] outline-none" />
          <button aria-label="展开" className="flex w-[34px] justify-center">
            <Chevron dir="down" className="size-[18px] stroke-[1.5] text-[#444]" />
          </button>
        </div>
      </div>
      <div className="mt-3 flex h-11 items-center pl-[102px]">
        <svg viewBox="0 0 28 30" className="-mt-2 mr-5 h-[30px] w-7">
          <path d="M14 0c4 3 9 4 14 4 0 12-3 20-14 26C3 24 0 16 0 4c5 0 10-1 14-4z" fill="#6d7780" />
          <path d="M13 2.500V14H1.500C1 11 1 8 1 5c4 0 8-1 12-2.500z" fill="#0067c8" />
          <path d="M15 2.500V14h11.500c.5-3 .5-6 .5-9-4 0-8-1-12-2.500z" fill="#ffb932" />
          <path d="M13 28.500V16H2c1 5 4 9.500 11 12.500z" fill="#ffb932" />
          <path d="M15 28.500V16h11c-1 5-4 9.500-11 12.500z" fill="#0067c8" />
          <path d="M14 1v28M1 15h26" stroke="#fff" strokeWidth="2" />
        </svg>
        <span>使用管理权限创建此任务。</span>
      </div>
    </div>
    <footer className="flex h-[116px] items-center justify-end gap-4 bg-[#f0f0f0] pr-[71px] pt-2">
      {["确定", "取消", "浏览(B)..."].map((b) => (
        <button key={b} className="h-[52px] w-[173px] border-2 border-[#adadad] bg-[#e1e1e1]">
          {b}
        </button>
      ))}
    </footer>
  </section>
);

/* ------------------------------------------------------------------ */
/* Group policy editor                                                 */
/* ------------------------------------------------------------------ */

type Node = { level: number; text: string; icon: () => React.ReactElement; open?: boolean; leaf?: boolean; selected?: boolean };

const RootIcon = () => <ScrollIcon className="size-8" />;

const tree: Node[] = [
  { level: 0, text: "本地计算机 策略", icon: RootIcon, leaf: true },
  { level: 1, text: "计算机配置", icon: ComputerCfgIcon, open: true },
  { level: 2, text: "软件设置", icon: FolderIcon },
  { level: 2, text: "Windows 设置", icon: FolderIcon, open: true },
  { level: 3, text: "域名解析策略", icon: FolderIcon },
  { level: 3, text: "脚本(启动/关机)", icon: ScriptIcon, leaf: true },
  { level: 3, text: "已部署的打印机", icon: PrinterIcon },
  { level: 3, text: "安全设置", icon: ServerLockIcon, open: true },
  { level: 4, text: "帐户策略", icon: FolderLockIcon, open: true },
  { level: 5, text: "密码策略", icon: FolderLockIcon, selected: true },
  { level: 5, text: "帐户锁定策略", icon: FolderLockIcon },
  { level: 4, text: "本地策略", icon: FolderLockIcon },
  { level: 4, text: "高级安全 Windows Defender", icon: FolderIcon },
  { level: 4, text: "网络列表管理器策略", icon: FolderIcon, leaf: true },
  { level: 4, text: "公钥策略", icon: FolderIcon },
  { level: 4, text: "软件限制策略", icon: FolderIcon },
  { level: 4, text: "应用程序控制策略", icon: FolderIcon },
  { level: 4, text: "IP 安全策略，在 本地计算机", icon: IpSecIcon },
  { level: 4, text: "高级审核策略配置", icon: FolderIcon },
  { level: 3, text: "基于策略的 QoS", icon: QosIcon },
  { level: 2, text: "管理模板", icon: FolderIcon },
  { level: 1, text: "用户配置", icon: UserCfgIcon, open: true },
  { level: 2, text: "软件设置", icon: FolderIcon },
];

const indent = ["pl-0.5", "pl-1.5", "pl-11", "pl-[82px]", "pl-[120px]", "pl-[158px]"];

const policies = [
  { name: "放宽最小密码长度限制", value: "没有定义", server: true },
  { name: "密码必须符合复杂性要求", value: "已禁用" },
  { name: "密码长度最小值", value: "0 个字符" },
  { name: "密码最短使用期限", value: "0 天" },
  { name: "密码最长使用期限", value: "42 天" },
  { name: "强制密码历史", value: "0 个记住的密码" },
  { name: "用可还原的加密来储存密码", value: "已禁用" },
  { name: "最小密码长度审核", value: "没有定义", server: true },
];

const ToolButton = ({ label, active, children }: { label: string; active?: boolean; children: React.ReactNode }) => (
  <button
    aria-label={label}
    className={
      active
        ? "flex h-[43px] w-[46px] items-center justify-center border border-[#99d1ff] bg-[#cce8ff]"
        : "flex h-[43px] w-[46px] items-center justify-center"
    }
  >
    <svg viewBox="0 0 32 32" className="size-8">
      {children}
    </svg>
  </button>
);

const ToolSep = () => <span className="ml-[3px] mr-3 h-10 w-px bg-[#8d8d8d]" />;

const PaneGlyph = ({ flip }: { flip?: boolean }) => (
  <g>
    <rect x="1" y="6" width="30" height="25" fill="#fff" stroke="#8a8f99" strokeWidth="2" />
    <path d="M2 7h28v3H2z" fill="#cfd3da" />
    <path d="M22 8.500h3M27 8.500h3" stroke="#3b5f9e" strokeWidth="2" />
    <path d="M1 11h30M1 14h30" stroke="#8a8f99" strokeWidth="1.500" />
    {flip ? (
      <>
        <path d="M21 14v16" stroke="#8a8f99" strokeWidth="2" />
        <path d="M24 18h4M24 22h4M24 26h4" stroke="#4a86c8" strokeWidth="1.800" />
        <path d="M8 17l7 5.500L8 28z" fill="#55b02e" />
      </>
    ) : (
      <>
        <path d="M11 14v16" stroke="#8a8f99" strokeWidth="2" />
        <path d="M4 18h4M4 22h4M4 26h4" stroke="#4a86c8" strokeWidth="1.800" />
        <path d="M23 17l-7 5.500 7 5.500z" fill="#55b02e" />
      </>
    )}
  </g>
);

const HScroll = ({ thumb }: { thumb: string }) => (
  <div className="flex h-[34px] shrink-0 items-center bg-[#f0f0f0]">
    <button aria-label="向左滚动" className="flex w-[34px] justify-center">
      <Chevron dir="left" className="size-[18px] stroke-[3] text-[#555]" />
    </button>
    <div className="h-full flex-1">
      <div className={thumb} />
    </div>
    <button aria-label="向右滚动" className="flex w-[34px] justify-center">
      <Chevron dir="right" className="size-[18px] stroke-[3] text-[#555]" />
    </button>
  </div>
);

const PolicyEditor = () => (
  <section aria-label="本地组策略编辑器" className="absolute left-[816px] right-[2px] top-[361px] flex h-[1058px] flex-col border-2 border-[#6f6f72] bg-white">
    <header className="flex h-14 shrink-0 items-center pl-3.5">
      <ScrollIcon className="size-8" />
      <h1 className="ml-1.5 flex-1">本地组策略编辑器</h1>
      <button aria-label="最小化" className="flex w-[92px] justify-center">
        <svg viewBox="0 0 20 20" className="size-5"><path d="M0 10h20" stroke="#000" strokeWidth="2" /></svg>
      </button>
      <button aria-label="最大化" className="flex w-[92px] justify-center">
        <svg viewBox="0 0 20 20" className="size-5"><rect x="1" y="1" width="18" height="18" fill="none" stroke="#000" strokeWidth="2" /></svg>
      </button>
      <button aria-label="关闭" className="mr-px flex w-[92px] justify-center">
        <svg viewBox="0 0 20 20" className="size-5"><path d="M0 0l20 20M20 0L0 20" stroke="#000" strokeWidth="1.800" /></svg>
      </button>
    </header>
    <nav className="flex h-[49px] shrink-0 items-center gap-[34px] border-b-2 border-[#b3b3b3] pl-5 pt-0.5">
      {["文件(F)", "操作(A)", "查看(V)", "帮助(H)"].map((m) => (
        <button key={m}>{m}</button>
      ))}
    </nav>
    <div className="flex h-[46px] shrink-0 items-center border-b border-[#d9d9d9] pl-[3px]">
      <ToolButton label="后退">
        <path d="M1 17L14 3v7h17v13H14v7z" fill="#3fb1f0" stroke="#2f6fa8" strokeWidth="1.500" />
        <path d="M4 16L13 7v5h16v4z" fill="#a5e0ff" opacity=".8" />
      </ToolButton>
      <ToolButton label="前进">
        <path d="M31 17L18 3v7H1v13h17v7z" fill="#8b8b8b" stroke="#666" strokeWidth="1.500" />
        <path d="M28 16l-9-9v5H3v4z" fill="#bcbcbc" opacity=".8" />
      </ToolButton>
      <ToolSep />
      <ToolButton label="上一级">
        <g transform="translate(0 4)"><Folder /></g>
        <path d="M7 21c5-1 7-4 7-10H9l7-9 7 9h-4c0 8-4 11-12 12z" fill="#5fd035" stroke="#3a9a1c" />
      </ToolButton>
      <span className="w-px" />
      <ToolButton label="显示/隐藏控制台树" active>
        <PaneGlyph />
      </ToolButton>
      <span className="-ml-px" />
      <ToolSep />
      <ToolButton label="导出列表">
        <path d="M1 1h18l7 7v23H1z" fill="#faf4dc" stroke="#9c9478" strokeWidth="1.200" />
        <path d="M19 1v7h7z" fill="#fff" stroke="#9c9478" />
        <path d="M6 13h2M6 19h2M6 25h2" stroke="#333" strokeWidth="2" />
        <path d="M11 13h9M11 19h4M11 25h7" stroke="#8b8ba0" strokeWidth="1.500" />
        <path d="M16 18h7v-5l9 8-9 8v-5h-7z" fill="#63cc3a" stroke="#45a024" />
      </ToolButton>
      <ToolSep />
      <ToolButton label="帮助">
        <rect x="3" y="0" width="26" height="32" fill="#3d62cf" />
        <path d="M3 0h7v32H3z" fill="#2a3f96" />
        <path d="M12 10c0-7 12-7 12 0 0 5-6 5-6 10" fill="none" stroke="#fff" strokeWidth="3.500" />
        <path d="M16 23h4v4h-4z" fill="#fff" />
      </ToolButton>
      <ToolButton label="显示/隐藏操作窗格">
        <PaneGlyph flip />
      </ToolButton>
    </div>

    <div className="flex min-h-0 flex-1 gap-1.5 bg-[#f0f0f0] pb-0.5 pl-px pt-3">
      <div className="flex w-[519px] shrink-0 flex-col border-2 border-[#828790] bg-white pb-0.5 pl-px pr-[3px] pt-0.5">
        <div className="flex min-h-0 flex-1">
          <ul role="tree" className="min-w-0 flex-1 overflow-hidden">
            {tree.map((n, i) => (
              <li key={i} role="treeitem" className={`flex h-9 items-center whitespace-nowrap ${indent[n.level]}`}>
                {n.level > 0 && (
                  <span className="flex w-[34px] shrink-0 justify-center pr-1">
                    {!n.leaf && (
                      <Chevron
                        dir={n.open ? "down" : "right"}
                        className={n.open ? "mt-0.5 size-[21px] stroke-[4] text-[#404040]" : "mt-0.5 size-[21px] stroke-[3.5] text-[#a3a3a3]"}
                      />
                    )}
                  </span>
                )}
                <span className={n.selected ? "flex h-9 shrink-0 items-center gap-2.5 bg-[#d9d9d9] pl-1 pr-2" : "flex shrink-0 items-center gap-2.5 pl-1 pr-2"}>
                  <n.icon />
                  <span>{n.text}</span>
                </span>
              </li>
            ))}
          </ul>
          <div className="flex w-8 shrink-0 flex-col items-center bg-[#f0f0f0]">
            <button aria-label="向上滚动" className="flex h-[34px] items-center">
              <Chevron dir="up" className="size-4 stroke-[3] text-[#555]" />
            </button>
            <div className="w-full flex-1">
              <div className="h-[88%] bg-[#cdcdcd]" />
            </div>
            <button aria-label="向下滚动" className="flex h-[34px] items-center">
              <Chevron dir="down" className="size-4 stroke-[3] text-[#555]" />
            </button>
          </div>
        </div>
        <div className="flex bg-[#f0f0f0] pr-8">
          <div className="flex-1">
            <HScroll thumb="h-full w-[80%] bg-[#cdcdcd]" />
          </div>
        </div>
      </div>

      <div className="flex min-w-0 flex-1 flex-col border-2 border-[#828790] bg-white px-0.5 pb-0.5">
        <div className="min-h-0 flex-1">
          <table className="w-full table-fixed text-left">
            <thead>
              <tr className="h-[50px]">
                <th className="relative border-r border-[#e5e5e5] pl-3 pt-0.5 font-normal">
                  <Chevron dir="up" className="absolute left-1/2 top-0 -ml-2 size-4 stroke-[1.5] text-[#666]" />
                  策略
                </th>
                <th className="w-[270px] pl-[11px] pt-0.5 font-normal">安全设置</th>
              </tr>
            </thead>
            <tbody>
              {policies.map((p) => (
                <tr key={p.name} className="h-[42px]">
                  <td>
                    <span className="flex items-center gap-1 pl-2">
                      {p.server ? <PolicyServerIcon /> : <PolicyBitsIcon />}
                      {p.name}
                    </span>
                  </td>
                  <td className="pl-[11px]">{p.value}</td>
                </tr>
              ))}
            </tbody>
          </table>
        </div>
        <HScroll thumb="h-full w-[97%] bg-[#cdcdcd]" />
      </div>
    </div>
    <footer className="flex h-[42px] shrink-0 border-t border-[#d0d0d0] bg-[#f0f0f0]">
      <div className="flex-1 border-r border-[#d7d7d7]" />
      <div className="w-[266px] border-r border-[#d7d7d7]" />
      <div className="mr-1 w-[170px] border-r border-[#d7d7d7]" />
    </footer>
  </section>
);

/* ------------------------------------------------------------------ */
/* Taskbar                                                             */
/* ------------------------------------------------------------------ */

const tasks: { label: string; icon: React.ReactNode; active?: boolean }[] = [
  { label: "C:\\Program Files\\E...", icon: <NotchFolder className="h-[42px] w-[30px]" /> },
  { label: "README.txt - 记事...", icon: <NotepadIcon /> },
  { label: "Eraser  [Scheduler]", icon: <EraserDoc className="h-12 w-10" /> },
  { label: "本地组策略编辑器", icon: <ScrollIcon className="size-12" />, active: true },
  { label: "运行", icon: <RunGlyph className="h-7 w-11" /> },
];

const Taskbar = () => (
  <footer className="flex h-20 shrink-0 items-center gap-0.5 overflow-hidden bg-linear-to-r from-[#001a23] to-[#000a1a] text-white">
    <button aria-label="开始" className="flex h-full w-[100px] shrink-0 items-center pl-8">
      <svg viewBox="0 0 32 32" className="size-8" fill="#fff">
        <path d="M0 4.500l13-1.800V15H0zM14.500 2.500L32 0v15H14.500zM0 16.500h13v12.300L0 27zM14.500 16.500H32V32l-17.500-2.500z" />
      </svg>
    </button>
    {tasks.map((t) => (
      <button key={t.label} className={t.active ? "flex h-full w-80 shrink-0 flex-col bg-[#34464f]" : "flex h-full w-80 shrink-0 flex-col px-2"}>
        <span className={t.active ? "flex w-full flex-1 items-center pl-5 pt-1" : "flex w-full flex-1 items-center pl-3 pt-1"}>
          <span className="mr-1 flex w-12 justify-center">{t.icon}</span>
          <span className="whitespace-pre">{t.label}</span>
        </span>
        <span className="h-1 w-full bg-[#76b9ed]" />
      </button>
    ))}
    <span className="ml-auto whitespace-pre pr-1.5 text-[45px] text-[#a9adb0]">CSDN @栖山 _0x5317</span>
  </footer>
);

export default function App() {
  return (
    <div className="flex h-screen w-full flex-col overflow-hidden font-['Open_Sans','Noto_Sans_CJK_SC',sans-serif] text-[24px] leading-8 text-black">
      <main className="relative flex-1 overflow-hidden bg-[radial-gradient(ellipse_100%_130%_at_16%_75%,#00b5ff_0%,#00b0ff_30%,#00a0f8_54%,#007fe2_76%,#005cc8_100%)]">
        <svg className="absolute inset-0 size-full" viewBox="0 0 2326 1602" preserveAspectRatio="none" aria-hidden="true">
          <path d="M260 0L1070 235H2326V0z" fill="#fff" opacity=".02" />
          <path d="M250 0l900 258h-20L240 0z" fill="#fff" opacity=".04" />
        </svg>
        <div className="relative flex text-white [text-shadow:1px_2px_3px_rgba(0,0,0,0.9),0_0_2px_rgba(0,0,0,0.6)]">
          {desktopColumns.map((col, c) => (
            <div key={c} className="w-[152px]">
              {col.map((d) => (
                <a key={d.name} href="#" className="flex h-[196px] flex-col items-center pt-[7px] text-center leading-[31px]">
                  {d.icon}
                  <span className="mt-[3px] w-36">{d.name}</span>
                </a>
              ))}
              {c === 0 && <div className="pl-2 pt-[332px]">Pr</div>}
            </div>
          ))}
        </div>
        <ExplorerWindow />
        <EraserWindow />
        <RunDialog />
        <PolicyEditor />
      </main>
      <Taskbar />
    </div>
  );
}
